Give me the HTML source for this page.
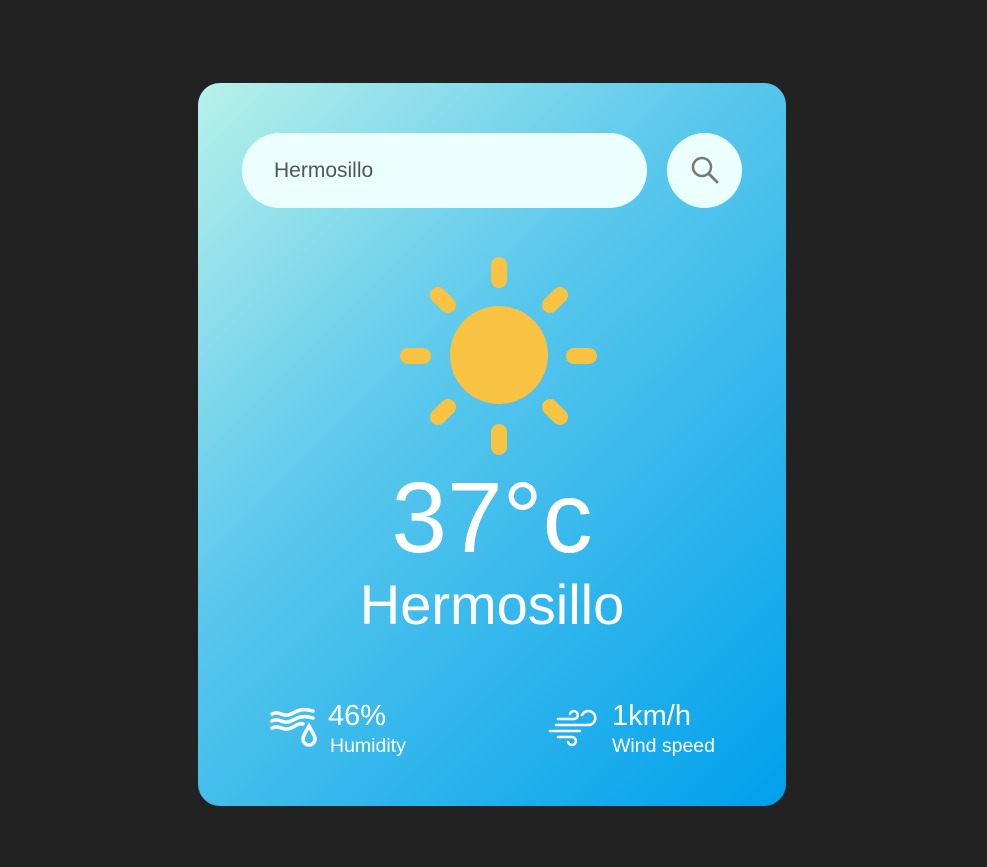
<!DOCTYPE html>
<html><head><style>
*{margin:0;padding:0;box-sizing:border-box}
body{width:987px;height:867px;background:#222;font-family:"Liberation Sans",Arial,sans-serif;position:relative;overflow:hidden}
.card{position:absolute;left:198px;top:83px;width:588px;height:723px;border-radius:22px;background:linear-gradient(135deg,#b8f1ea 0%,#5bc8ec 40%,#00a0ec 100%)}
.inp{position:absolute;left:44px;top:50px;width:405px;height:75px;border-radius:38px;background:#ebfffd;font-size:21px;color:#555;padding-left:32px;line-height:75px}
.btn{position:absolute;left:469px;top:50px;width:75px;height:75px;border-radius:50%;background:#ebfffd}
.t{position:absolute;left:0;width:100%;text-align:center;color:#fff}
.temp{top:385px;font-size:100px;line-height:100px}
.city{top:491px;font-size:56px;line-height:62px}
.big{position:absolute;color:#fff;font-size:29px;top:617px}
.small{position:absolute;color:#fff;font-size:19.5px;top:652px}
</style></head><body>
<div class="card">
<div class="inp">Hermosillo</div>
<div class="btn"><svg width="75" height="75"><circle cx="35" cy="34" r="9" fill="none" stroke="#777" stroke-width="2.5"/><line x1="42" y1="41" x2="50" y2="49" stroke="#777" stroke-width="2.8" stroke-linecap="round"/></svg></div>
<svg style="position:absolute;left:200px;top:172px" width="204" height="204" viewBox="0 0 204 204">
<g stroke="#f8c342" stroke-width="16" stroke-linecap="round">
<line x1="101" y1="10" x2="101" y2="25"/><line x1="101" y1="177" x2="101" y2="192"/>
<line x1="10" y1="101" x2="25" y2="101"/><line x1="176" y1="101" x2="191" y2="101"/>
<line x1="40" y1="40" x2="50" y2="50"/><line x1="162" y1="40" x2="152" y2="50"/>
<line x1="40" y1="162" x2="50" y2="152"/><line x1="162" y1="162" x2="152" y2="152"/>
</g><circle cx="101" cy="100" r="49" fill="#f8c342"/></svg>
<div class="t temp">37°c</div>
<div class="t city">Hermosillo</div>
<svg style="position:absolute;left:71px;top:623px" width="50" height="45" viewBox="0 0 50 45" fill="none" stroke="#fff" stroke-width="3.5" stroke-linecap="round">
<path d="M3 8 C10 4 14 12 22 8 S34 2 44 5"/><path d="M3 15 C10 11 14 19 22 15 S34 9 44 12"/><path d="M3 22 C10 18 14 26 22 22 S30 17 34 18"/>
<path d="M40 20 C36 27 34 30 34 33 a6 6 0 0 0 12 0 C46 30 44 27 40 20Z"/></svg>
<div class="big" style="left:130px">46%</div>
<div class="small" style="left:132px">Humidity</div>
<svg style="position:absolute;left:350px;top:624px" width="52" height="42" viewBox="0 0 52 42" fill="none" stroke="#fff" stroke-width="2.5" stroke-linecap="round">
<path d="M10 12 H26 a4 4 0 1 0 -4 -5"/><path d="M8 18 H40 a7 7 0 1 0 -6 -10"/><path d="M2 24 H32"/><path d="M10 30 H24 a4 4 0 1 1 -4 5"/></svg>
<div class="big" style="left:414px">1km/h</div>
<div class="small" style="left:414px">Wind speed</div>
</div>
</body></html>
